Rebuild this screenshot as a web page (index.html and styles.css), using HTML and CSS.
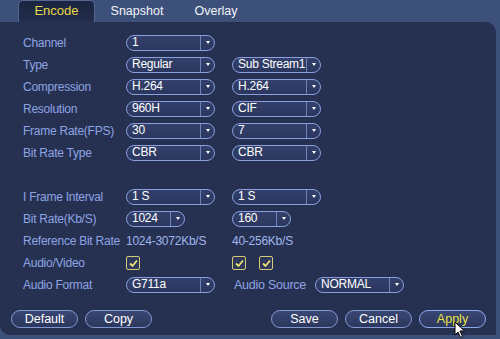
FILE: index.html
```html
<!DOCTYPE html>
<html lang="en">

<head>
    <meta charset="UTF-8" />
    <meta name="viewport" content="width=device-width, initial-scale=1.0" />
    <title>Encode</title>

    <link rel="stylesheet" href="styles.css">

</head>

<body>
    <div class="tabs">
        <div class="tab active">Encode</div>
        <div class="tab tab-snap">Snapshot</div>
        <div class="tab tab-over">Overlay</div>
    </div>

    <div class="panel">
        <div class="form-grid">
            <label>Channel</label>
            <div class="select">1</div>
            <div></div>

            <label>Type</label>
            <div class="select">Regular</div>
            <div class="select">Sub Stream1</div>

            <label>Compression</label>
            <div class="select">H.264</div>
            <div class="select">H.264</div>

            <label>Resolution</label>
            <div class="select">960H</div>
            <div class="select">CIF</div>

            <label>Frame Rate(FPS)</label>
            <div class="select">30</div>
            <div class="select">7</div>

            <label>Bit Rate Type</label>
            <div class="select">CBR</div>
            <div class="select">CBR</div>

            <div class="spacer"></div>

            <label>I Frame Interval</label>
            <div class="select">1 S</div>
            <div class="select">1 S</div>

            <label>Bit Rate(Kb/S)</label>
            <div class="select small">1024</div>
            <div class="select small">160</div>

            <label>Reference Bit Rate</label>
            <div class="value">1024-3072Kb/S</div>
            <div class="value">40-256Kb/S</div>

            <label>Audio/Video</label>
            <div><span class="check"></span></div>
            <div class="checks"><span class="check"></span><span class="check"></span></div>

            <label>Audio Format</label>
            <div class="select">G711a</div>
            <div class="inline">
                <label class="inline-label">Audio Source</label>
                <div class="select">NORMAL</div>
            </div>
        </div>

        <div class="button-row">
            <div class="button-group">
                <button>Default</button>
                <button>Copy</button>
            </div>
            <div class="button-group">
                <button>Save</button>
                <button>Cancel</button>
                <button class="primary">Apply</button>
            </div>
        </div>
    </div>

    <!-- mouse pointer over Apply -->
    <svg class="cursor" width="12" height="18" viewBox="0 0 12 18">
        <path d="M1 1 L1 14 L4 11 L6.5 16.5 L8.5 15.5 L6 10 L10.5 10 Z" fill="#fff" stroke="#000" stroke-width="1" stroke-linejoin="round" />
    </svg>
</body>

</html>
```

FILE: styles.css
```css
html,
body {
    margin: 0;
    padding: 0;
}

body {
    width: 500px;
    height: 339px;
    background: #3d5079;
    font-family: "Liberation Sans", Arial, sans-serif;
    font-size: 12px;
    letter-spacing: -0.25px;
    position: relative;
    overflow: hidden;
}

.tabs {
    display: flex;
    height: 22px;
    padding-left: 18px;
    box-sizing: border-box;
}

.tab {
    color: #f2f4fa;
    font-size: 12.5px;
    letter-spacing: 0;
    line-height: 20px;
    text-align: center;
    width: 84px;
    padding-top: 1px;
}

.tab.active {
    width: 77px;
    color: #e9d84c;
    font-size: 13px;
    background: linear-gradient(#1b2440, #232d4c);
    border: 1px solid #55678f;
    border-bottom: none;
    border-radius: 5px 5px 0 0;
    box-sizing: border-box;
    padding-top: 0;
}

.tab-over {
    width: 74px;
}

.panel {
    width: 496px;
    height: 313px;
    background: #263152;
    border-radius: 0 10px 0 10px;
    padding: 10px 10px 0 23px;
    box-sizing: border-box;
}

.form-grid {
    display: grid;
    grid-template-columns: 103px 106px 1fr;
    grid-auto-rows: 22px;
    align-items: center;
}

label {
    color: #8ea4e2;
    white-space: nowrap;
}

.spacer {
    grid-column: 1 / -1;
}

.select {
    position: relative;
    width: 89px;
    height: 16px;
    box-sizing: border-box;
    border: 1.5px solid #8a9fdc;
    border-radius: 8px;
    background: linear-gradient(#33406b, #2b375f);
    color: #ffffff;
    line-height: 13px;
    padding-left: 5px;
    white-space: nowrap;
}

.select::after {
    content: "";
    position: absolute;
    right: 0;
    top: 0;
    width: 13px;
    height: 100%;
    border-left: 1px solid #6f82bc;
}

.select::before {
    content: "";
    position: absolute;
    right: 4px;
    top: 5px;
    border-left: 2.5px solid transparent;
    border-right: 2.5px solid transparent;
    border-top: 3px solid #ffffff;
}

.select.small {
    width: 59px;
}

.value {
    color: #a2b5ec;
    white-space: nowrap;
}

.checks {
    display: flex;
    gap: 13px;
}

.check {
    display: block;
    width: 14px;
    height: 14px;
    box-sizing: border-box;
    border: 1.5px solid #d6cb74;
    border-radius: 2px;
    background: #2d375a url("data:image/svg+xml,%3Csvg xmlns='http://www.w3.org/2000/svg' width='11' height='11' viewBox='0 0 11 11'%3E%3Cpath d='M2 5.5 L4.5 8 L9 2.5' fill='none' stroke='%23ece374' stroke-width='1.8'/%3E%3C/svg%3E") center / 11px 11px no-repeat;
}

.inline {
    display: flex;
    align-items: center;
    gap: 9px;
    margin-left: 2px;
}

.inline-label {
    font-size: 12.5px;
}

.button-row {
    display: flex;
    justify-content: space-between;
    margin: 14px 0 0 -12px;
}

.button-group {
    display: flex;
    gap: 7px;
}

button {
    width: 67px;
    height: 18px;
    padding: 0;
    border: 1.5px solid #8297d0;
    border-radius: 9px;
    background: linear-gradient(#3a4773, #2c375d);
    color: #ffffff;
    font-family: "Liberation Sans", Arial, sans-serif;
    font-size: 12.5px;
}

button.primary {
    color: #e8e04a;
    border-color: #8fa9f0;
}

.cursor {
    position: absolute;
    left: 454px;
    top: 321px;
}
```
